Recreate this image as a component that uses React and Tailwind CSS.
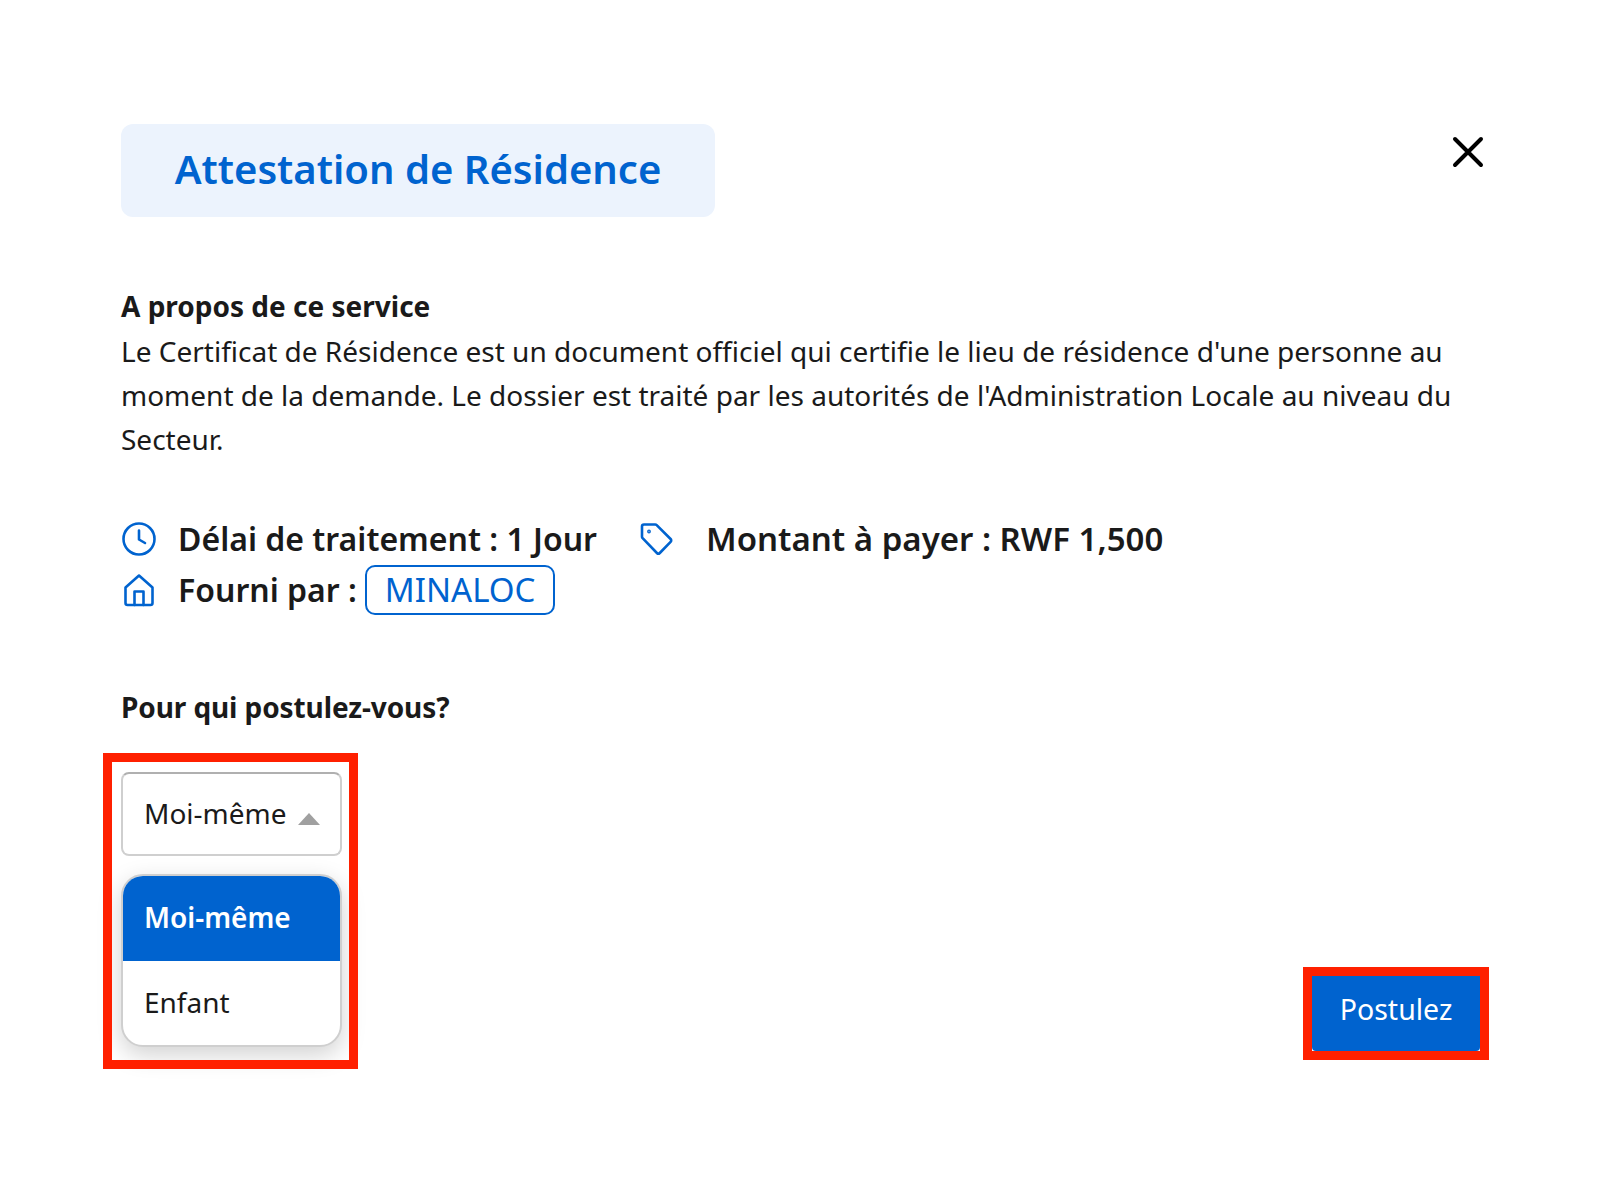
const F = { fontFamily: '"Noto Sans","Open Sans",sans-serif', fontVariantLigatures: 'none' };

function Clock() {
  return (
    <svg width="34" height="34" viewBox="0 0 34 34" className="ml-[1px]" fill="none" stroke="#0063cf" strokeWidth="2.6" strokeLinecap="round" strokeLinejoin="round">
      <circle cx="17" cy="17" r="15.5" />
      <path d="M17 8.5V17.5L23 21" />
    </svg>
  );
}
function TagIcon() {
  return (
    <svg width="34" height="34" viewBox="0 0 34 34" fill="none" stroke="#0063cf" strokeWidth="2.6" strokeLinecap="round" strokeLinejoin="round">
      <path d="M3 4.5C3 3.4 3.9 2.5 5 2.5H16.2C16.8 2.5 17.3 2.7 17.7 3.1L31.6 17C32.4 17.8 32.4 19 31.6 19.8L20.8 31C20 31.8 18.7 31.8 17.9 31L3.6 16.2C3.2 15.8 3 15.3 3 14.8V4.5Z" />
      <circle cx="10" cy="9.5" r="0.6" fill="#0063cf" />
    </svg>
  );
}
function HomeIcon() {
  return (
    <svg width="34" height="34" viewBox="0 0 34 34" className="ml-[1px]" fill="none" stroke="#0063cf" strokeWidth="2.6" strokeLinecap="round" strokeLinejoin="round">
      <path d="M3.5 14.5L17 2.5L30.5 14.5V30C30.5 31 29.7 32 28.5 32H5.5C4.3 32 3.5 31 3.5 30V14.5Z" />
      <path d="M12.5 32V18.5H21.5V32" />
    </svg>
  );
}

export default function App() {
  return (
    <div style={F} className="w-[1600px] h-[1182px] bg-white text-[#1a1a1a] pl-[121px] pr-[116px] pt-[124px] overflow-hidden">
      <div className="flex justify-between items-start">
        <div className="w-[594px] h-[93px] pb-[3px] rounded-[12px] bg-[#ecf3fd] flex items-center justify-center">
          <h1 className="text-[40px] font-semibold text-[#0063cf] leading-none">Attestation de Résidence</h1>
        </div>
        <svg width="32" height="32" viewBox="0 0 32 32" className="mt-[12px]" fill="none" stroke="#000" strokeWidth="4" strokeLinecap="round">
          <path d="M3 3L29 29M29 3L3 29" />
        </svg>
      </div>

      <div className="mt-[67px] text-[28px] leading-[44px]">
        <h2 className="font-bold">A propos de ce service</h2>
        <p className="pt-[1px]">Le Certificat de Résidence est un document officiel qui certifie le lieu de résidence d'une personne au moment de la demande. Le dossier est traité par les autorités de l'Administration Locale au niveau du Secteur.</p>
      </div>

      <div className="mt-[52px] text-[32px] font-semibold leading-[51px]">
        <div className="flex items-center">
          <Clock />
          <span className="ml-[22px]">Délai de traitement : 1 Jour</span>
          <span className="ml-[42px]"><TagIcon /></span>
          <span className="ml-[33px] text-[33px]">Montant à payer : RWF 1,500</span>
        </div>
        <div className="flex items-center">
          <HomeIcon />
          <span className="ml-[22px]">Fourni par :</span>
          <span className="ml-[8px] h-[50px] px-[18px] rounded-[10px] border-2 border-[#0063cf] text-[#0063cf] text-[33px] font-normal flex items-center">MINALOC</span>
        </div>
      </div>

      <h3 className="mt-[70px] text-[28px] leading-[44px] font-bold tracking-[-0.1px]">Pour qui postulez-vous?</h3>

      <div className="mt-[43px] flex justify-between items-start">
        <div className="relative w-[221px]">
          <div className="absolute -left-[18px] -right-[16px] -top-[19px] -bottom-[22px] border-[9px] border-[#ff2000] pointer-events-none" />
          <div className="h-[84px] rounded-[8px] border-2 border-[#cfcfcf] border-t-[#b0b0b0] flex items-center pl-[21px] text-[28px] font-normal">
            <span className="pb-[2px]">Moi-même</span>
            <svg width="22" height="12" viewBox="0 0 22 12" className="ml-[11px] mt-[9px]"><path d="M11 0L22 12H0Z" fill="#a0a0a0" /></svg>
          </div>
          <div className="mt-[18px] h-[173px] rounded-[22px] border-2 border-[#cfcfcf] bg-white overflow-hidden shadow-[0_8px_24px_rgba(0,0,0,0.18)] text-[28px]">
            <div className="h-[85px] pb-[4px] bg-[#0063cf] text-white font-semibold flex items-center pl-[21px]">Moi-même</div>
            <div className="h-[85px] pb-[4px] flex items-center pl-[21px]">Enfant</div>
          </div>
        </div>

        <div className="relative mt-[204px] mr-[4px] w-[168px] h-[75px] pb-[9px] rounded-b-[4px] bg-[#0063cf] text-white text-[28.5px] flex items-center justify-center">
          <div className="absolute -inset-[9px] border-[9px] border-[#ff2000] pointer-events-none" />
          Postulez
        </div>
      </div>
    </div>
  );
}
